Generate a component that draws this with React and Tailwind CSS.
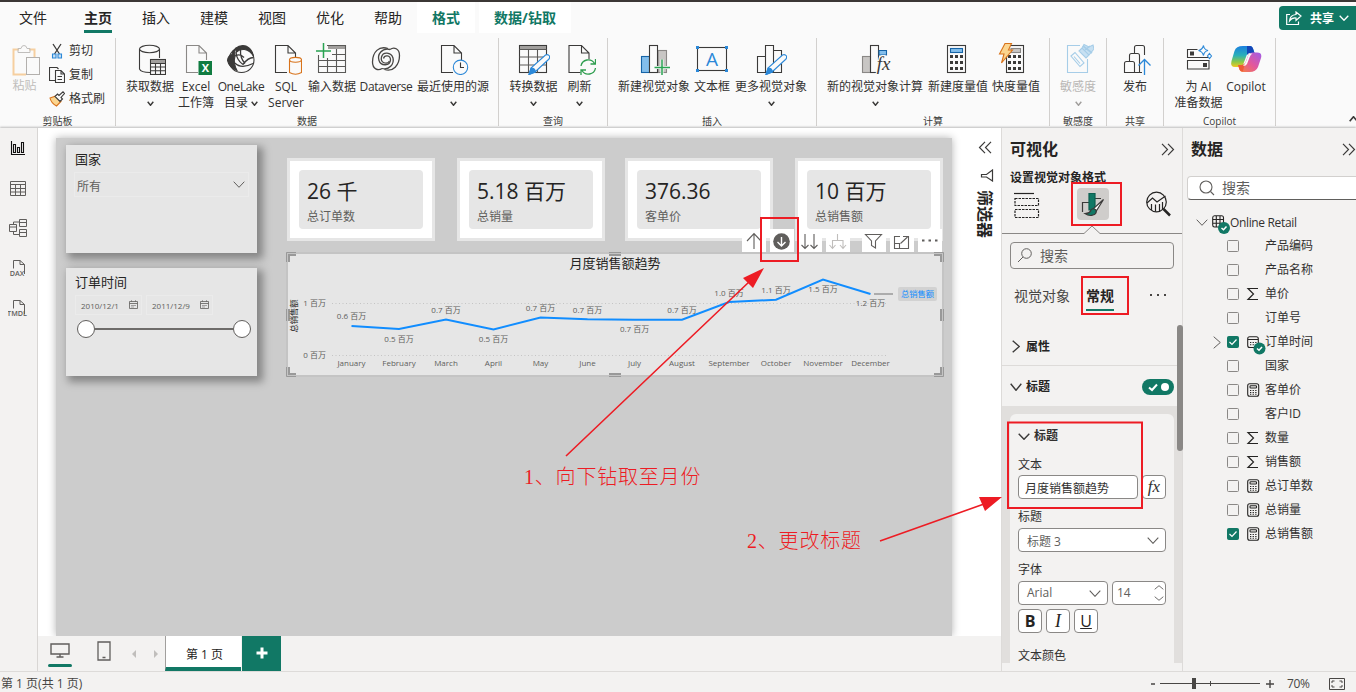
import { Fragment } from 'react';

const INK = '#3b3a39';
const GREEN = '#117865';

/* ---------- shared drawing helpers ---------- */

const Icon = ({ size = 32, className = '', children }) => (
  <svg
    width={size}
    height={size}
    viewBox={`0 0 ${size} ${size}`}
    fill="none"
    stroke={INK}
    strokeWidth="1.1"
    className={`shrink-0 ${className}`}
  >
    {children}
  </svg>
);

const Chevron = ({ w = 12, h = 6, dir = 'down', color = INK, stroke = 1.2, className = '' }) => {
  const paths = {
    down: `M.7 .7L${w / 2} ${h - 0.7}L${w - 0.7} .7`,
    up: `M.7 ${h - 0.7}L${w / 2} .7L${w - 0.7} ${h - 0.7}`,
    right: `M.7 .7L${w - 0.7} ${h / 2}L.7 ${h - 0.7}`,
  };
  return (
    <svg width={w} height={h} fill="none" stroke={color} strokeWidth={stroke} className={`shrink-0 ${className}`}>
      <path d={paths[dir]} />
    </svg>
  );
};

const DoubleChevron = ({ flip }) => (
  <svg width="14" height="13" fill="none" stroke={INK} strokeWidth="1.2" className={flip ? 'rotate-180' : ''}>
    <path d="M1 .8L6.5 6.5L1 12.2M7 .8L12.5 6.5L7 12.2" />
  </svg>
);

const Doc = ({ x = 5, stroke = INK }) => (
  <path d={`M${x + 20.5} 17V10L${x + 13} 2.5H${x + 0.5}V29.5H${x + 12}M${x + 13} 2.5V10H${x + 20.5}`} stroke={stroke} />
);

const Pencil = () => (
  <g stroke="#2b88d8">
    <path d="M11 31.5L13.5 24.5L27.5 12Q30 11 31.5 13Q32 15 30.5 16.5L17 29Z" fill="#fafafa" />
    <path d="M11 31.5L13 25Q17 25 17.5 29Z" fill="#2b88d8" />
  </g>
);

/* ---------- ribbon icons ---------- */

const GetDataIcon = () => (
  <Icon>
    <ellipse cx="15.5" cy="6" rx="10" ry="3.7" />
    <path d="M5.5 6V26Q7 29.5 16 29.5M25.5 6V15" />
    <rect x="16.5" y="16.5" width="15" height="15" fill="#fafafa" />
    <rect x="17" y="17" width="14" height="3" fill="#a19f9d" stroke="none" />
    <path d="M16.5 20.5H31.5M16.5 24H31.5M16.5 27.8H31.5M21.5 20.5V31.5M26.5 20.5V31.5" />
  </Icon>
);

const ExcelIcon = () => (
  <Icon>
    <Doc x={6} stroke="#8a8886" />
    <rect x="18.5" y="18" width="14" height="14" fill="#107c41" stroke="none" />
    <text x="25.5" y="29" fontSize="11" fontWeight="700" textAnchor="middle" fill="#fff" stroke="none">X</text>
  </Icon>
);

const OneLakeIcon = () => (
  <Icon>
    <circle cx="16.5" cy="17" r="12.5" />
    <path d="M10.500 5.500Q15 1.500 21 3Q27 5.500 28.500 13Q25 7.500 19.500 6.500Q14.500 6 11.500 9Z" fill={INK} />
    <path d="M10.500 5.500Q9 9 10 13Q8 20 12 27.500Q4 24.500 2.500 17.500Q3 12.500 7 11.500Q7.500 7.500 10.500 5.500Z" fill={INK} />
    <path d="M11 9Q11.500 17 18 21.500M15.500 7Q15 15 20 20.500M18 21.500Q23 14.500 28.500 14.500M10 20Q16 26.500 28 20.500M10 13Q15 10 19 14.500" strokeWidth="1.300" />
  </Icon>
);

const SqlIcon = () => (
  <Icon>
    <Doc x={5} />
    <path d="M19.500 17V29.5Q25.500 33 31.500 29.5V17Z" fill="#fafafa" stroke="#d8731b" />
    <ellipse cx="25.5" cy="16.8" rx="6" ry="2.4" fill="#fafafa" stroke="#d8731b" />
  </Icon>
);

const EnterDataIcon = () => (
  <Icon>
    <path d="M12 2H30V6H12Z" fill="#a19f9d" stroke="none" />
    <path d="M11 2.500H29.500V29.500H2.500V12M2.500 17.500H29.500M2.500 23.500H29.500M16 11.500H29.500M11.500 15V29.500M20.500 6V29.500" stroke="#5a5957" />
    <path d="M0 8H15M7.500 0V15" stroke="#29a352" strokeWidth="1.5" />
  </Icon>
);

const DataverseIcon = () => (
  <Icon>
    <g strokeWidth="1.300" stroke="#484644">
      <path d="M18 5.500C9 2.500 2.500 9 2.500 19C2.500 26 8 28 12 25.500" />
      <path d="M14.500 26.500C23 29.500 29.500 22 29.500 12.500C29.500 5.500 24 3.500 20 6.500" />
      <path d="M12 25.500C19 27.500 24.500 21 23 15C21 9 13 8.500 11.500 14C10 20 17 22 19.500 18" />
      <path d="M20 6.500C12 4.500 7 11.500 9 17.500C11 23.500 20 23 20.500 17C20.500 12 14.500 11.500 13.500 15.500" />
    </g>
  </Icon>
);

const RecentIcon = () => (
  <Icon>
    <Doc x={4} />
    <circle cx="23.5" cy="24.300" r="7.200" fill="#fafafa" stroke="#2b88d8" />
    <path d="M23.500 19.500V24.500H27" />
  </Icon>
);

const TransformIcon = () => (
  <Icon>
    <rect x="1.500" y="2.500" width="27" height="27" />
    <path d="M2 3H28V6H2Z" fill="#a19f9d" stroke="none" />
    <path d="M1.500 6.500H28.500M1.500 14H28.500M1.500 22H28.500M10.500 6.500V29.500M19.500 6.500V29.500" stroke="#5a5957" />
    <Pencil />
  </Icon>
);

const RefreshIcon = () => (
  <Icon>
    <Doc x={4.500} />
    <circle cx="24.500" cy="24" r="8" fill="#fafafa" stroke="none" />
    <path d="M17 23A7.300 7.300 0 0 1 30.500 20.500M31.500 16V21H26.500M31.500 25A7.300 7.300 0 0 1 18 27.500M17 32V27H22" stroke="#2f9e4f" strokeWidth="1.3" />
  </Icon>
);

const NewVisualIcon = () => (
  <Icon>
    <rect x="20" y="7.500" width="8.500" height="22" fill="#c8c6c4" stroke="#8a8886" />
    <rect x="3.500" y="13.500" width="8" height="16" fill="#83beec" stroke="#1664a7" />
    <rect x="11.500" y="2.500" width="8" height="27" fill="#fafafa" />
    <path d="M16.500 24.500H32M24 16.500V32" stroke="#fafafa" strokeWidth="3" />
    <path d="M16.500 24.500H32M24 16.500V32" stroke="#29a352" strokeWidth="1.500" />
  </Icon>
);

const TextBoxIcon = () => (
  <Icon>
    <rect x="1.500" y="4.500" width="29" height="23" />
    <g fill="#2b88d8" stroke="none">
      <rect x="0" y="3" width="3" height="3" />
      <rect x="29" y="3" width="3" height="3" />
      <rect x="0" y="26" width="3" height="3" />
      <rect x="29" y="26" width="3" height="3" />
    </g>
    <text x="16" y="23" fontSize="19" fontWeight="400" textAnchor="middle" fill="#2b88d8" stroke="none">A</text>
  </Icon>
);

const MoreVisualsIcon = () => (
  <Icon>
    <path d="M2.500 13.500H10.500V29.500H2.500ZM18.500 7.500H26.500V29.500H18.500M10.500 2.500H18.500V29.500H10.500Z" />
    <Pencil />
  </Icon>
);

const NewCalcIcon = () => (
  <Icon>
    <rect x="3.500" y="13.500" width="8" height="16" fill="#c8c6c4" stroke="#8a8886" />
    <rect x="11.500" y="2.500" width="8" height="27" />
    <path d="M20 7.500H27.500V12H20Z" fill="#83beec" stroke="#1664a7" />
    <text x="24.500" y="27" fontFamily="Liberation Serif" fontSize="19" fontStyle="italic" textAnchor="middle" fill={INK} stroke="#fafafa" strokeWidth="2.500" paintOrder="stroke">fx</text>
  </Icon>
);

const Keys = ({ x, y }) => (
  <g fill={INK} stroke="none">
    {[0, 1, 2].map((row) =>
      [0, 1, 2].map((col) => <rect key={`${row}${col}`} x={x + col * 5} y={y + row * 6} width="3" height="3" />)
    )}
  </g>
);

const MeasureIcon = () => (
  <Icon>
    <rect x="5.500" y="2.500" width="18" height="27" />
    <rect x="8.500" y="5.500" width="12" height="4" fill="#83beec" stroke="#1664a7" />
    <Keys x={8} y={12} />
  </Icon>
);

const QuickMeasureIcon = () => (
  <Icon className="overflow-visible">
    <rect x="6.500" y="2.500" width="17" height="27" />
    <rect x="11" y="5.500" width="9.500" height="4" fill="#c8c6c4" stroke="#8a8886" />
    <Keys x={8} y={12} />
    <path d="M5 .5H11.500L8.500 7H12.500L1.500 20L4 11H-.5Z" fill="#fbd58f" stroke="#d8731b" />
  </Icon>
);

const SensitivityIcon = () => (
  <Icon>
    <g stroke="#a6cde8">
      <path d="M18 2.500H5.500V29.500H25.500V16" />
      <path d="M9 13L13 9.500L22 20L18 23.500ZM12 13.500L18 20.500" />
      <path d="M17 8L20 5L27 12L24 15ZM20 5L22 1.500L27 4L31 2L32 6L27 12" fill="#c7e0f2" />
      <path d="M23 7L28 3M21 3L30 10" strokeWidth="1.600" />
    </g>
  </Icon>
);

const PublishIcon = () => (
  <Icon>
    <path d="M5.500 29.500V20.500Q5.500 18.500 7.500 18.500H13.500Q15.500 18.500 15.500 20.500V29.500ZM10.500 18.500V12.500Q10.500 10.500 12.500 10.500H18.500Q20.500 10.500 20.500 12.500V29.500H15.500M15.500 10.500V4.500Q15.500 2.500 17.500 2.500H23.500Q25.500 2.500 25.500 4.500V12M20.500 29.500H23" />
    <path d="M25.500 32V17M19.500 22.500L25.500 16.500L31.500 22.500" stroke="#2b88d8" strokeWidth="1.300" />
  </Icon>
);

const PrepareAiIcon = () => (
  <Icon>
    <path d="M14.500 6.500H4.500V14.500H25.500M4.500 17.500H26V26H4.500Z" />
    <path d="M7 8.500H11V12.500H7ZM20 20H24V24H20Z" fill={INK} stroke="none" />
    <path d="M20.500 2.500Q21 6.500 25 7.500Q21 8.500 20.500 12.500Q19.500 8.500 15.500 7.500Q19.500 6.500 20.500 2.500ZM26.500 10.500L28.500 13L26.500 15.500L24.500 13Z" stroke="#2b88d8" fill="#fafafa" />
  </Icon>
);

const CopilotIcon = () => (
  <Icon>
    <defs>
      <linearGradient id="cpLeft" x1="0" y1="0" x2="0" y2="1">
        <stop offset="0" stopColor="#1a7fe0" />
        <stop offset=".45" stopColor="#2ab0b8" />
        <stop offset=".75" stopColor="#8ac84a" />
        <stop offset="1" stopColor="#f3c91f" />
      </linearGradient>
      <linearGradient id="cpRight" x1="1" y1="0" x2="0" y2="1">
        <stop offset="0" stopColor="#a05be8" />
        <stop offset=".5" stopColor="#e3579c" />
        <stop offset="1" stopColor="#f8863a" />
      </linearGradient>
    </defs>
    <g stroke="none">
      <path d="M13 3H20Q22.500 3 23.500 7L24.500 10H20Q17 10 16 14L13 22Q12 24 9 24H5Q0 24 1.500 18L4.500 8Q6 3 13 3Z" fill="url(#cpLeft)" />
      <path d="M17 3H20Q22.500 3 23.500 7L24.500 10H20Q18 10 17 12Z" fill="#1346b8" />
      <path d="M19.500 29H12.500Q10 29 9 25L8 22H11.500Q15 22 16 18L18.500 11.500Q19.500 9.500 23 9.500H27Q32.500 9.500 31 15L28 24Q26 29 19.500 29Z" fill="url(#cpRight)" />
      <path d="M8 22H12Q14.500 22 15 20L13 28Q10 29 9 25Z" fill="#ef5b36" />
      <path d="M19 10.500H22.500Q20.500 11.500 19.500 14.500L17 21Q16 23 13 23Q15 21.500 16 18.500Z" fill="#fafafa" />
    </g>
  </Icon>
);

/* ---------- ribbon ---------- */

const RibbonButton = ({ width, icon, label, label2, arrow, disabled, tight }) => (
  <div className={`${width} flex shrink-0 flex-col items-center whitespace-nowrap ${disabled ? 'text-[#b9b7b5]' : 'text-[#323130]'}`}>
    {icon}
    <span className={`mt-1 h-4 leading-4 ${tight ? 'tracking-[-0.4px]' : ''}`}>{label}</span>
    {label2 && (
      <span className="flex h-4 items-center gap-[3px] leading-4">
        {label2}
        {label2 === '目录' && <Chevron w={7} h={5} stroke={1.4} />}
      </span>
    )}
    {arrow && <Chevron w={7} h={5} stroke={1.4} color={disabled ? '#a19f9d' : INK} className="mt-[6px]" />}
  </div>
);

const RibbonGroup = ({ width, label, children }) => (
  <div className={`${width} flex h-[88px] shrink-0 flex-col justify-between border-r border-[#d2d0ce]`}>
    <div className="flex pt-[5px] pl-2">{children}</div>
    <div className="h-3 text-center text-[10px] leading-[14px] text-[#3b3a39]">{label}</div>
  </div>
);

const Ribbon = () => (
  <div className="flex h-[90px] shrink-0 bg-[#fafafa] text-xs text-[#323130]">
    <div className="flex h-[88px] w-[116px] shrink-0 flex-col justify-between border-r border-[#d2d0ce]">
      <div className="flex pt-px">
        <div className="flex w-[49px] flex-col items-center pt-[5px] text-[#c0bebc]">
          <svg width="30" height="34" fill="none" className="ml-[5px]">
            <path d="M7 5.500H1.500V30.500H14M22.500 16V5.500H17" stroke="#f6cfa0" strokeWidth="2" fill="none" />
            <path d="M6 8.500V4.500H9Q9.500 1.500 12 1.500T15 4.500H18V8.500Z" stroke="#c0bebc" />
            <rect x="14.500" y="13.500" width="13" height="17" fill="#fafafa" stroke="#b3b0ad" />
          </svg>
          <span>粘贴</span>
        </div>
        <div className="flex flex-col">
          <div className="flex h-6 items-center gap-1">
            <Icon size={16}>
              <path d="M4 1L10.500 11M12 1L5.500 11" strokeWidth="1.300" />
              <path d="M3.500 11H7V15H3.500ZM9 11H12.500V15H9Z" stroke="#2b88d8" fill="#c7e0f4" />
            </Icon>
            剪切
          </div>
          <div className="flex h-6 items-center gap-1">
            <Icon size={16}>
              <path d="M6 13.500H.5V.5H8L9.500 2" />
              <path d="M6.500 3.500H12L15.500 7V15.500H6.500ZM12 3.500V7H15.500M8.500 9.500H13M8.500 12.500H13" />
            </Icon>
            复制
          </div>
          <div className="flex h-6 items-center gap-1">
            <Icon size={16}>
              <path d="M1 7L7 5L12 10.500L7.500 15Q2 12 1 7Z" fill="#fbd58f" stroke="#d8731b" />
              <path d="M6 5.500L8.500 3L10 4.500L14 .8L15.500 2.500L12 6.500L13.500 8L11 10.500Z" fill="#fafafa" />
            </Icon>
            格式刷
          </div>
        </div>
      </div>
      <div className="h-3 text-center text-[10px] leading-[14px] text-[#3b3a39]">剪贴板</div>
    </div>
    <RibbonGroup width="w-[383px]" label="数据">
      <RibbonButton width="w-[52px]" icon={<GetDataIcon />} label="获取数据" arrow />
      <RibbonButton width="w-[40px]" icon={<ExcelIcon />} label="Excel" label2="工作簿" />
      <RibbonButton width="w-[50px]" icon={<OneLakeIcon />} label="OneLake" label2="目录" tight />
      <RibbonButton width="w-[40px]" icon={<SqlIcon />} label="SQL" label2="Server" />
      <RibbonButton width="w-[52px]" icon={<EnterDataIcon />} label="输入数据" />
      <RibbonButton width="w-[56px]" icon={<DataverseIcon />} label="Dataverse" tight />
      <RibbonButton width="w-[78px]" icon={<RecentIcon />} label="最近使用的源" arrow />
    </RibbonGroup>
    <RibbonGroup width="w-[109px]" label="查询">
      <RibbonButton width="w-[53px]" icon={<TransformIcon />} label="转换数据" arrow />
      <RibbonButton width="w-[39px]" icon={<RefreshIcon />} label="刷新" arrow />
    </RibbonGroup>
    <RibbonGroup width="w-[209px]" label="插入">
      <RibbonButton width="w-[76px]" icon={<NewVisualIcon />} label="新建视觉对象" />
      <RibbonButton width="w-[40px]" icon={<TextBoxIcon />} label="文本框" />
      <RibbonButton width="w-[78px]" icon={<MoreVisualsIcon />} label="更多视觉对象" arrow />
    </RibbonGroup>
    <RibbonGroup width="w-[233px]" label="计算">
      <RibbonButton width="w-[100px]" icon={<NewCalcIcon />} label="新的视觉对象计算" arrow />
      <RibbonButton width="w-[66px]" icon={<MeasureIcon />} label="新建度量值" />
      <RibbonButton width="w-[50px]" icon={<QuickMeasureIcon />} label="快度量值" />
    </RibbonGroup>
    <RibbonGroup width="w-[57px]" label="敏感度">
      <RibbonButton width="w-[40px]" icon={<SensitivityIcon />} label="敏感度" arrow disabled />
    </RibbonGroup>
    <RibbonGroup width="w-[57px]" label="共享">
      <RibbonButton width="w-[40px]" icon={<PublishIcon />} label="发布" />
    </RibbonGroup>
    <RibbonGroup width="w-[112px]" label="Copilot">
      <RibbonButton width="w-[53px]" icon={<PrepareAiIcon />} label="为 AI" label2="准备数据" />
      <RibbonButton width="w-[42px]" icon={<CopilotIcon />} label="Copilot" />
    </RibbonGroup>
    <div className="flex flex-1 items-end justify-end overflow-hidden pb-[6px]">
      <Chevron w={9} h={6} dir="up" stroke={1.6} className="-mr-[2px]" />
    </div>
  </div>
);

const TABS = ['插入', '建模', '视图', '优化', '帮助'];

const TabBar = () => (
  <div className="flex h-9 shrink-0 bg-[#fafafa] text-sm text-[#252423]">
    <div className="flex h-[31px] flex-1 pl-1">
      <div className="w-[58px] pt-[5px] text-center leading-[22px]">文件</div>
      <div className="ml-[7px] flex w-[58px] flex-col items-center pt-[5px] leading-[22px] font-bold">
        主页
        <div className="mt-[1px] h-[3px] w-7 bg-[#117865]" />
      </div>
      {TABS.map((tab) => (
        <div key={tab} className="w-[58px] pt-[5px] text-center leading-[22px]">
          {tab}
        </div>
      ))}
      <div className="w-[58px] bg-white pt-[5px] text-center leading-[22px] font-bold text-[#117865]">格式</div>
      <div className="ml-1 w-[92px] bg-white pt-[5px] text-center leading-[22px] font-bold text-[#117865]">数据/钻取</div>
    </div>
    <div className="mt-1 flex h-6 w-[77px] items-center gap-2 rounded-l bg-[#117865] pl-[7px] text-xs font-bold text-white">
      <svg width="16" height="15" fill="none" stroke="#fff" strokeWidth="1.2">
        <path d="M4 3.500H.7V13.500H12.500V10.500" />
        <path d="M10 1L15 5L10 9.500V7Q6 6.500 3.500 10Q4 4 10 3.500Z" />
      </svg>
      <span className="pt-px">共享</span>
      <Chevron w={10} h={6} color="#fff" stroke={1.3} className="-ml-[3px]" />
    </div>
  </div>
);

/* ---------- left rail ---------- */

const RailDoc = ({ text }) => (
  <svg width="20" height="20" fill="none" stroke="#605e5c">
    <path d="M5.500 11V2.500H12L16.500 6.500V16M12 2.500V6.500H16.500" />
    <rect x="0" y="10.500" width="15" height="8" fill="#f3f2f1" stroke="none" />
    <text x="9" y="18" fontSize="7.2" fontWeight="600" fill="#605e5c" stroke="none" textAnchor="middle">
      {text}
    </text>
  </svg>
);

const LeftRail = () => (
  <div className="flex w-[38px] shrink-0 flex-col border-r border-[#d8d6d4] bg-[#f3f2f1]">
    {[
      <svg key="report" width="16" height="16" fill="none" stroke="#111" strokeWidth="1.100">
        <path d="M1.500 1V14.500H15M3.500 4.500H5.500V12.500H3.500ZM7.500 7.500H9.500V12.500H7.500ZM11.500 2.500H13.500V12.500H11.500Z" />
      </svg>,
      <svg key="table" width="16" height="15" fill="none" stroke="#605e5c">
        <path d="M.5 .5H15.500V14.500H.5ZM.5 3.500H15.500M.5 7.500H15.500M.5 11H15.500M5.500 3.500V14.500M10.500 3.500V14.500" />
      </svg>,
      <svg key="model" width="18" height="18" fill="none" stroke="#605e5c">
        <path d="M.5 5.500H7.500V12.500H.5ZM.5 8H7.500M10.500 .5H17.500V7.500H10.500ZM10.500 3.500H17.500M10.500 10.500H17.500V17.500H10.500ZM10.500 13.500H17.500M4.500 5.500V3H10.500M4.500 12.500V15.500H10.500" />
      </svg>,
      <RailDoc key="dax" text="DAX" />,
      <RailDoc key="tmdl" text="TMDL" />,
    ].map((icon, i) => (
      <div key={i} className="flex h-10 items-center justify-center pr-px">
        {icon}
      </div>
    ))}
  </div>
);

/* ---------- report page ---------- */

const CalendarIcon = () => (
  <svg width="9" height="9" fill="none" stroke="#605e5c" strokeWidth=".8" className="-mt-px">
    <path d="M.5 1.500H8.500V8.500H.5ZM.5 3.500H8.500" />
    <path d="M2 5.500H7M2 7H5M2.500 0V2M6.500 0V2" strokeWidth=".5" />
  </svg>
);

const Slicers = () => (
  <div className="flex w-[191px] flex-col gap-[15px] pt-[7px]">
    <div className="h-[108px] bg-[#e6e6e6] pt-[5px] shadow-[4px_4px_8px_2px_rgba(0,0,0,0.35)]">
      <div className="pl-[9px] text-[13px] leading-[18px] text-[#252423]">国家</div>
      <div className="mx-2 mt-1 flex h-[25px] items-center justify-between border border-[#ebebeb] pr-[3px] pl-[2px] text-xs text-[#605e5c]">
        <span className="pt-1">所有</span>
        <Chevron w={12} h={7} color="#605e5c" stroke={1} className="-mt-[1px]" />
      </div>
    </div>
    <div className="h-[108px] bg-[#e6e6e6] pt-[5px] shadow-[4px_4px_8px_2px_rgba(0,0,0,0.35)]">
      <div className="pl-[9px] text-[13px] leading-[18px] text-[#252423]">订单时间</div>
      <div className="mt-1 flex gap-1 pl-[9px] text-[8px] text-[#605e5c]">
        {['2010/12/1', '2011/12/9'].map((day) => (
          <div key={day} className="flex h-5 w-[67px] items-center justify-between border border-[#ebebeb] pr-[3px] pl-[5px]">
            <span className="pt-px">{day}</span>
            <CalendarIcon />
          </div>
        ))}
      </div>
      <div className="mt-[5px] ml-[11px] flex items-center">
        <div className="h-[18px] w-[18px] rounded-full border-[1.5px] border-[#605e5c] bg-white" />
        <div className="h-[2px] w-[138px] bg-[#6e6c6a]" />
        <div className="h-[18px] w-[18px] rounded-full border-[1.5px] border-[#605e5c] bg-white" />
      </div>
    </div>
  </div>
);

const KPIS = [
  { value: '26', unit: '千', label: '总订单数' },
  { value: '5.18', unit: '百万', label: '总销量' },
  { value: '376.36', unit: '', label: '客单价' },
  { value: '10', unit: '百万', label: '总销售额' },
];

const KpiCard = ({ value, unit, label }) => (
  <div className="h-[83px] w-[148px] border-[3px] border-[#e6e6e6] bg-white p-[9px]">
    <div className="h-[59px] w-[124px] rounded bg-[#e6e6e6] pt-[5px] pl-2 whitespace-nowrap">
      <div className="h-[33px] text-[21px] leading-8 text-[#252423]">
        <span className="font-medium">{value}</span> {unit}
      </div>
      <div className="text-xs leading-[17px] text-[#605e5c]">{label}</div>
    </div>
  </div>
);

const SALES = [
  { month: 'January', x: 351.5, y: 326, label: '0.6 百万', ly: 316 },
  { month: 'February', x: 399, y: 329, label: '0.5 百万', ly: 339 },
  { month: 'March', x: 446, y: 319.5, label: '0.7 百万', ly: 310 },
  { month: 'April', x: 493.5, y: 329.5, label: '0.5 百万', ly: 339 },
  { month: 'May', x: 540.5, y: 317.5, label: '0.7 百万', ly: 308 },
  { month: 'June', x: 587.5, y: 319.3, label: '0.7 百万', ly: 310 },
  { month: 'July', x: 634.6, y: 319.8, label: '0.7 百万', ly: 329 },
  { month: 'August', x: 682, y: 319.8, label: '0.7 百万', ly: 310 },
  { month: 'September', x: 729, y: 302, label: '1.0 百万', ly: 293 },
  { month: 'October', x: 776, y: 299.7, label: '1.1 百万', ly: 290 },
  { month: 'November', x: 823, y: 279.5, label: '1.5 百万', ly: 289 },
  { month: 'December', x: 870.5, y: 294, label: '1.2 百万', ly: 303 },
];

const SalesChart = () => (
  <svg width="658" height="125" viewBox="286 252 658 125" className="shrink-0">
    <rect x="286" y="252" width="658" height="125" fill="#c4c4c4" />
    <rect x="288" y="254" width="654" height="121" fill="#e6e6e6" />
    <g fill="none" stroke="#999">
      <path d="M286.500 262V252.500H296M934 252.500H943.500V262M286.500 367V376.500H296M934 376.500H943.500V367M609 252.500H621M609 376.500H621M286.500 309V321M943.500 309V321" />
      <path d="M289 262V255H296M934 255H941V262M289 367V374H296M934 374H941V367M609 255H621M609 374H621M289 309V321M941 309V321" strokeWidth="2" />
    </g>
    <path d="M332 303.500H887M332 355.500H887" stroke="#c4c4c4" strokeDasharray="1 2.500" />
    <text x="615" y="268" fontSize="13" fill="#252423" textAnchor="middle">月度销售额趋势</text>
    <g fontSize="8" fill="#605e5c" textAnchor="middle">
      <text x="326" y="306" textAnchor="end">1 百万</text>
      <text x="326" y="358" textAnchor="end">0 百万</text>
      {SALES.map((s) => (
        <Fragment key={s.month}>
          <text x={s.x} y={366}>{s.month}</text>
          <text x={s.x} y={s.ly + 3}>{s.label}</text>
        </Fragment>
      ))}
      <text transform="translate(297 316) rotate(-90)" fontSize="8.3" fill="#252423">总销售额</text>
    </g>
    <polyline points={SALES.map((s) => `${s.x},${s.y}`).join(' ')} fill="none" stroke="#118dff" strokeWidth="2" />
    <path d="M874 294H893" stroke="#999" strokeWidth="1.500" />
    <rect x="898" y="287" width="39" height="14" rx="2" fill="#d2d2d2" />
    <text x="917.5" y="297" fontSize="8.300" fill="#118dff" textAnchor="middle">总销售额</text>
  </svg>
);

const VisualToolbar = () => (
  <div className="absolute top-[91px] left-[686px] flex h-[23px] gap-1">
    {[
      <path key="up" d="M12 20V5M5 12L12 4.500L19 12" />,
      <g key="down">
        <circle cx="11.500" cy="12.500" r="8.300" fill="#605e5c" stroke="none" />
        <path d="M11.500 8V17M7.500 13L11.500 17L15.500 13" stroke="#fff" strokeWidth="1.400" />
      </g>,
      <path key="next" d="M7 5V19.500M3.500 16L7 19.500L10.500 16M16 5V19.500M12.500 16L16 19.500L19.500 16" />,
      <path key="expand" d="M11.500 5V11M6.500 19V11.500H17V19M3.500 16L6.500 19.500L9.500 16M14 16L17 19.500L20 16" stroke="#c0bebc" />,
      <path key="filter" d="M3.500 5.500H19.500L13.500 12V19L9.500 16.500V12Z" />,
      <path key="focus" d="M10 7.500H4.500V19.500H18.500V7.500H16M4.500 14.500H9.500V19.500M10.500 14.500L17.500 8M13 7.500H18.500V12.500" />,
      <path key="more" d="M4 11.500H6.500M10.500 11.500H13M17 11.500H19.500" strokeWidth="2.200" />,
    ].map((shape, i) => (
      <div key={i} className={`w-6 bg-white ${i === 4 ? 'ml-2' : ''}`}>
        <svg width="24" height="23" fill="none" stroke="#605e5c" strokeWidth="1.100">
          {shape}
        </svg>
      </div>
    ))}
  </div>
);

const ReportPage = () => (
  <div className="relative ml-[18px] flex h-[498px] w-[896px] bg-[#cccccc] pl-[10px] shadow-[0_0_8px_rgba(0,0,0,0.3)]">
    <Slicers />
    <div className="ml-[29px] flex flex-col pt-5">
      <div className="grid grid-cols-[170px_168px_170px_148px] pl-px">
        {KPIS.map((kpi) => (
          <KpiCard key={kpi.label} {...kpi} />
        ))}
      </div>
      <div className="mt-[11px]">
        <SalesChart />
      </div>
    </div>
    <VisualToolbar />
  </div>
);

const FilterPane = () => (
  <div className="flex w-[41px] shrink-0 flex-col items-center pt-[13px] pl-2">
    <DoubleChevron flip />
    <svg width="14" height="13" fill="none" stroke={INK} strokeWidth="1.200" className="mt-[15px] ml-1">
      <path d="M12.500 1V12L6.500 8H1.500V5.500H6.500Z" />
    </svg>
    <div className="mt-[8px] text-base leading-[18px] font-bold text-[#252423] [text-orientation:sideways] [writing-mode:vertical-rl]">
      筛选器
    </div>
  </div>
);

const PageTabs = () => (
  <div className="flex h-[35px] shrink-0 bg-[#f3f2f1] pl-[10px]">
    <div className="flex w-6 flex-col items-center pt-[7px]">
      <svg width="20" height="15" fill="none" stroke="#605e5c" strokeWidth="1.400">
        <path d="M1 1H19V11H1ZM10 11V14M6.500 14H13.500" />
      </svg>
      <div className="mt-[6px] h-[3px] w-6 rounded bg-[#117865]" />
    </div>
    <svg width="14" height="20" fill="none" stroke="#605e5c" strokeWidth="1.300" className="mt-[5px] ml-[25px]">
      <path d="M1 1H13V19H1ZM5.500 16.500H8.500" />
    </svg>
    <svg width="28" height="10" fill="#c0bebc" className="mt-[13px] ml-5">
      <path d="M5 1V9L1 5ZM23 1V9L27 5Z" />
    </svg>
    <div className="ml-[6px] flex h-[35px] w-[76px] items-center justify-center border-b-4 border-l border-b-[#117865] border-l-[#a19f9d] bg-white pt-[6px] pl-[2px] text-xs text-[#252423]">
      第 1 页
    </div>
    <div className="ml-px flex w-[39px] items-center justify-center bg-[#117865]">
      <svg width="12" height="12" stroke="#fff" strokeWidth="3" className="-mt-[2px]">
        <path d="M6 .5V11.500M.5 6H11.500" />
      </svg>
    </div>
  </div>
);

/* ---------- visualization pane ---------- */

const SectionHeader = ({ open, children, toggle }) => (
  <div className="flex h-10 items-center pt-[1px] pr-2 text-xs font-bold text-[#252423]">
    <span className="flex w-6 items-center pl-2">
      {open ? (
        <Chevron w={12} h={8} stroke={1.4} />
      ) : (
        <span className="pl-[2px]">
          <Chevron w={8} h={13} dir="right" stroke={1.4} />
        </span>
      )}
    </span>
    <span className="pt-px">{children}</span>
    {toggle && (
      <svg width="32" height="16" className="ml-auto">
        <rect width="32" height="16" rx="8" fill={GREEN} />
        <path d="M7 8.500L10 11L15 5.500" fill="none" stroke="#fff" strokeWidth="2" />
        <circle cx="23" cy="8" r="4" fill="#fff" />
      </svg>
    )}
  </div>
);

const FormatCard = () => (
  <div className="h-[257px] shrink-0 bg-[#e1dfdd] pt-2 pl-2">
    <div className="h-[249px] w-[164px] overflow-hidden rounded-t-md bg-[#f3f2f1] px-2 text-xs leading-4 text-[#323130]">
      <div className="flex items-center gap-1 pt-[14px] font-bold">
        <Chevron w={12} h={7} stroke={1.4} />
        标题
      </div>
      <div className="mt-[13px]">文本</div>
      <div className="mt-[2px] flex gap-1">
        <div className="flex h-6 w-[120px] items-center rounded-sm border border-[#8a8886] bg-white pt-[3px] pl-[6px]">月度销售额趋势</div>
        <div className="flex h-6 w-6 items-center justify-center rounded-sm border border-[#8a8886] bg-white font-['Liberation_Serif',serif] text-[17px] italic">fx</div>
      </div>
      <div className="mt-[10px]">标题</div>
      <div className="mt-[3px] flex h-6 items-center justify-between rounded-sm border border-[#8a8886] bg-white pt-[4px] pr-[6px] pl-2 text-[#605e5c]">
        标题 3
        <Chevron w={12} h={7} color="#605e5c" stroke={1.1} className="-mt-1" />
      </div>
      <div className="mt-[10px]">字体</div>
      <div className="mt-[3px] flex gap-1">
        <div className="flex h-6 w-[90px] items-center justify-between rounded-sm border border-[#8a8886] bg-white pr-[6px] pl-2 text-[#605e5c]">
          Arial
          <Chevron w={12} h={7} color="#605e5c" stroke={1.1} />
        </div>
        <div className="flex h-6 w-[54px] items-center justify-between rounded-sm border border-[#8a8886] bg-white pr-[1px] pl-1 text-[#605e5c]">
          14
          <div className="flex flex-col gap-[6px]">
            <Chevron w={10} h={5} dir="up" color="#605e5c" stroke={0.9} />
            <Chevron w={10} h={5} color="#605e5c" stroke={0.9} />
          </div>
        </div>
      </div>
      <div className="mt-1 flex gap-1 text-base text-[#252423]">
        <div className="flex h-6 w-6 items-center justify-center rounded-sm border border-[#8a8886] bg-white font-bold">B</div>
        <div className="flex h-6 w-6 items-center justify-center rounded-sm border border-[#8a8886] bg-white font-['Liberation_Serif',serif] text-lg italic">I</div>
        <div className="flex h-6 w-6 items-center justify-center rounded-sm border border-[#8a8886] bg-white underline">U</div>
      </div>
      <div className="mt-[15px]">文本颜色</div>
    </div>
  </div>
);

const VisualizationPane = () => (
  <div className="relative flex w-[182px] shrink-0 flex-col border-x border-[#dddbd9] bg-[#f3f2f1]">
    <div className="flex h-[42px] shrink-0 items-center justify-between pr-[7px] pl-2 text-base font-bold text-[#252423]">
      可视化
      <DoubleChevron />
    </div>
    <div className="h-4 shrink-0 pl-2 text-xs leading-4 font-bold whitespace-nowrap text-[#252423]">设置视觉对象格式</div>
    <div className="flex h-[47px] shrink-0 justify-between pt-[2px] pr-[11px] pl-3">
      <svg width="26" height="28" fill="none" stroke="#252423" strokeWidth="1.200" className="mt-1">
        <path d="M0 1.500H20" />
        <path d="M1 6.500H24.500V13.500H1ZM1 17.500H24.500V25.500H1Z" strokeDasharray="2.500 1" />
      </svg>
      <div className="-ml-px flex h-8 w-8 items-center justify-center rounded-sm bg-[#cfcdcb]">
        <svg width="24" height="26" fill="none" stroke={INK} strokeWidth="1.200">
          <path d="M1.500 21V11.500H8M14 7.500H20" />
          <path d="M8 2.500H14V19H8Z" fill={GREEN} stroke="#0c5f50" />
          <path d="M22.500 8.500L12.500 17.500L15 20.500Z" fill="#fff" />
          <path d="M4 22.500Q9 22.500 10 19Q12 16.500 15 19Q16 23 12 24Q8 25.500 4 22.500Z" fill={GREEN} />
        </svg>
      </div>
      <svg width="25" height="26" fill="none" stroke="#252423" strokeWidth="1.200" className="mt-[3px]">
        <circle cx="10.500" cy="11" r="9.800" />
        <path d="M1 12L6.500 7L11 11L19.500 5M5.500 19V13M9.500 20.500V13.500M13.500 20.500V13M16.500 18V11" />
        <path d="M17.500 18L24 24.500" strokeWidth="2.500" />
      </svg>
    </div>
    <svg width="180" height="9" fill="none" stroke="#8a8886" className="-mt-[8px] shrink-0">
      <path d="M0 8.500H82L90 1L98 8.500H180" />
    </svg>
    <div className="mx-2 mt-2 flex h-[27px] shrink-0 items-center gap-2 rounded-sm border border-[#8a8886] bg-[#f3f2f1] pl-[6px] text-sm text-[#605e5c]">
      <svg width="15" height="15" fill="none" stroke="#605e5c">
        <circle cx="9.500" cy="5.500" r="4.800" />
        <path d="M6 9L1 14" />
      </svg>
      搜索
    </div>
    <div className="mt-[16px] flex h-[41px] shrink-0 items-start pl-3 text-sm leading-[22px] text-[#484644]">
      视觉对象
      <div className="ml-4 font-bold text-[#252423]">
        常规
        <div className="mt-[2px] h-[2px] w-7 bg-[#117865]" />
      </div>
      <svg width="18" height="4" fill="#484644" className="mt-2 ml-[35px]">
        <path d="M1 1H3V3H1ZM8 1H10V3H8ZM15 1H17V3H15Z" />
      </svg>
    </div>
    <div className="h-10 shrink-0 border-b border-[#dddbd9]">
      <SectionHeader>属性</SectionHeader>
    </div>
    <SectionHeader open toggle>标题</SectionHeader>
    <FormatCard />
    <div className="absolute top-[197px] -right-px h-[126px] w-[6px] rounded bg-[#8a8886]" />
  </div>
);

/* ---------- data pane ---------- */

const FIELDS = [
  { name: '产品编码' },
  { name: '产品名称' },
  { name: '单价', icon: 'sum' },
  { name: '订单号' },
  { name: '订单时间', icon: 'date', checked: true, expandable: true },
  { name: '国家' },
  { name: '客单价', icon: 'calc' },
  { name: '客户ID' },
  { name: '数量', icon: 'sum' },
  { name: '销售额', icon: 'sum' },
  { name: '总订单数', icon: 'calc' },
  { name: '总销量', icon: 'calc' },
  { name: '总销售额', icon: 'calc', checked: true },
];

const Badge = () => (
  <g>
    <circle cx="12.500" cy="13.500" r="6" fill={GREEN} stroke="none" />
    <path d="M10 13.500L12 15.300L15 12" stroke="#fff" strokeWidth="1.500" />
  </g>
);

const FieldIcon = ({ kind }) => (
  <svg width="18" height="14" fill="none" stroke="#252423" strokeWidth="1.100" className="overflow-visible">
    {kind === 'sum' && <path d="M11 1.500H1L6.500 7L1 12.500H11" strokeWidth="1.200" />}
    {kind === 'calc' && (
      <g>
        <rect x=".7" y=".7" width="11" height="12.600" rx="2" />
        <rect x="3" y="2.700" width="6.500" height="2.300" rx=".8" />
        <path d="M3 7.500H4.300M5.600 7.500H6.900M8.200 7.500H9.500M3 9.500H4.300M5.600 9.500H6.900M8.200 9.500H9.500M3 11.300H4.300M5.600 11.300H6.900M8.200 11.300H9.500" />
      </g>
    )}
    {kind === 'date' && (
      <g>
        <path d="M8 12.500H2.700Q.7 12.500 .7 10.500V3.700Q.7 1.700 2.700 1.700H9.300Q11.300 1.700 11.300 3.700V8M.7 4.500H11.300M3 7.500H4.300M5.600 7.500H6.900M8.200 7.500H9.500M3 9.800H4.300M5.600 9.800H6.900" />
        <Badge />
      </g>
    )}
  </svg>
);

const DataPane = () => (
  <div className="flex min-w-0 flex-1 flex-col overflow-hidden bg-[#f3f2f1] text-xs text-[#323130]">
    <div className="flex h-[42px] shrink-0 items-center justify-between pl-2 text-base font-bold text-[#252423]">
      数据
      <DoubleChevron />
    </div>
    <div className="mt-[6px] -mr-2 ml-1 flex h-6 shrink-0 items-center gap-[7px] rounded border border-[#d2d0ce] border-b-[#605e5c] bg-white pl-[11px] text-sm text-[#605e5c]">
      <svg width="16" height="16" fill="none" stroke="#605e5c" strokeWidth="1.100">
        <circle cx="7" cy="7" r="6" />
        <path d="M11.500 11.500L15 15" />
      </svg>
      搜索
    </div>
    <div className="mt-[10px] flex h-6 shrink-0 items-center pl-[13px]">
      <Chevron w={12} h={7} color="#605e5c" stroke={1} />
      <svg width="18" height="14" fill="none" stroke="#252423" strokeWidth="1.100" className="ml-1 overflow-visible">
        <path d="M2.500 .7H9.500Q11.500 .7 11.500 2.700V10Q11.500 12 9.500 12H2.500Q.7 12 .7 10V2.700Q.7 .7 2.500 .7ZM.7 4.500H11.500M.7 8.200H11.500M4.300 .7V12M8 .7V12" />
        <g transform="translate(-.5 -.5)"><Badge /></g>
      </svg>
      <span className="pt-px tracking-[-0.35px]">Online Retail</span>
    </div>
    {FIELDS.map((field) => (
      <div key={field.name} className="flex h-6 shrink-0 items-center">
        <span className="flex w-11 justify-start pl-[30px]">
          {field.expandable && <Chevron w={8} h={13} dir="right" color="#605e5c" stroke={1} />}
        </span>
        <svg width="12" height="12" fill="none" className="shrink-0">
          <rect x=".5" y=".5" width="11" height="11" rx="1" fill={field.checked ? GREEN : 'none'} stroke={field.checked ? GREEN : '#8a8886'} />
          {field.checked && <path d="M2.500 6L5 8.500L9.500 3.500" stroke="#fff" strokeWidth="1.200" />}
        </svg>
        <span className="ml-2">
          <FieldIcon kind={field.icon} />
        </span>
        {field.name}
      </div>
    ))}
  </div>
);

const StatusBar = () => (
  <div className="flex h-[21px] shrink-0 items-center border-t border-[#dddbd9] bg-[#f3f2f1] pt-[3px] pl-[1px] text-xs text-[#484644]">
    <span className="pt-px">第 1 页(共 1 页)</span>
    <svg width="126" height="14" fill="none" stroke="#484644" className="ml-auto">
      <path d="M3 7H7M118 7H126M122 3V11" strokeWidth="1.400" />
      <path d="M12 6.500H112M62.500 4V9" />
      <rect x="44" y="1" width="4" height="11" fill="#484644" stroke="none" />
    </svg>
    <span className="ml-[13px] w-6 tracking-[-0.4px]">70%</span>
    <svg width="16" height="12" fill="none" stroke="#484644" className="mr-[11px] ml-[18px]">
      <path d="M.5 .5H15.500V11.500H.5ZM3 5V3H5.500M10.500 3H13V5M13 7V9H10.500M5.500 9H3V7" />
    </svg>
  </div>
);

/* ---------- tutorial marks laid over the window ---------- */

const Annotations = () => (
  <div className="pointer-events-none absolute -top-[2px] left-0 h-[692px] w-[1356px] font-['Liberation_Serif','Noto_Sans_CJK_SC',serif] text-[20px] leading-6 font-light tracking-[0.8px] whitespace-nowrap text-[#ed1c24]">
    <svg width="1356" height="692" fill="none" stroke="#ed1c24" strokeWidth="2">
      <path d="M761 218H798V261H761ZM1072 183H1121V225H1072ZM1082 277H1128V314H1082ZM1008 422.500H1142V508H1008Z" />
      <path d="M566 456L750 281M880 541L984 504" strokeWidth="1.600" />
      <path d="M764 268L753 288L743 278ZM1002 497L985 511L979 497Z" fill="#ed1c24" stroke="none" />
    </svg>
    <div className="absolute top-[465px] left-[524px]">1、向下钻取至月份</div>
    <div className="absolute top-[529px] left-[747px]">2、更改标题</div>
  </div>
);

const App = () => {
  return (
    <div className="relative flex h-[692px] w-[1356px] flex-col overflow-hidden border-t-2 border-[#3b3735] bg-[#f3f2f1] font-['Open_Sans','Noto_Sans_CJK_SC',sans-serif]">
      <TabBar />
      <Ribbon />
      <div className="flex h-[543px] shrink-0 shadow-[0_-1px_2px_rgba(0,0,0,0.25)]">
        <LeftRail />
        <div className="flex w-[963px] shrink-0 flex-col">
          <div className="flex h-[508px] shrink-0 overflow-hidden bg-white">
            <div className="w-[922px] shrink-0 pt-[10px]">
              <ReportPage />
            </div>
            <FilterPane />
          </div>
          <PageTabs />
        </div>
        <VisualizationPane />
        <DataPane />
      </div>
      <StatusBar />
      <Annotations />
    </div>
  );
};

export default App;
